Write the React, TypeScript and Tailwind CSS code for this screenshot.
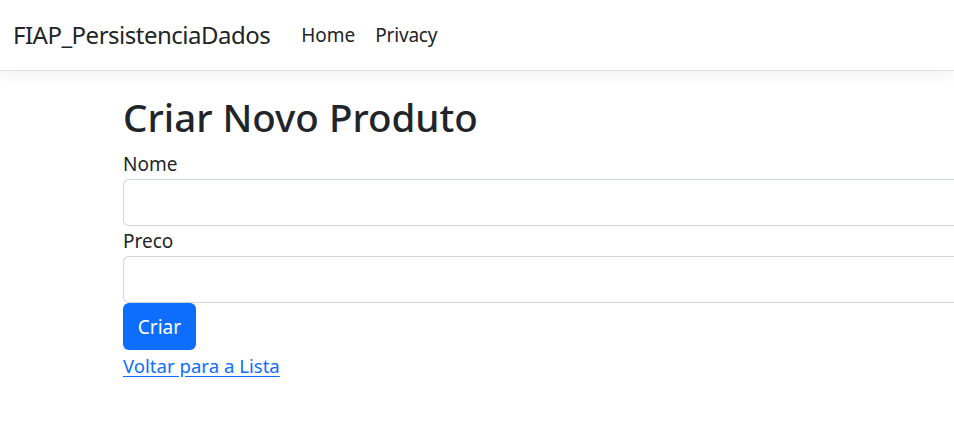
import React from "react";

export default function App() {
  const font = { fontFamily: '"Noto Sans", "Open Sans", sans-serif' };
  return (
    <div className="min-h-[446px] w-[954px] overflow-hidden bg-white text-[#212529]" style={font}>
      <nav className="h-[71px] flex items-center border-b border-[#dee2e6] bg-white shadow-[0_5px_15px_rgba(0,0,0,0.05)]">
        <span className="ml-[13px] text-[24px] leading-[36px] text-[#212529] tracking-[-0.5px]">FIAP_PersistenciaDados</span>
        <a className="ml-[31px] text-[19px] leading-[30px] text-[#212529]">Home</a>
        <a className="ml-[20px] text-[19px] leading-[30px] text-[#212529] tracking-[-0.2px]">Privacy</a>
      </nav>
      <main className="pl-[123px]">
        <h1 className="mt-[21px] mb-[7px] text-[38.5px] leading-[50px] font-medium text-[#212529]">Criar Novo Produto</h1>
        <form className="flex flex-col">
          <label className="text-[19px] leading-[30px]">Nome</label>
          <input className="h-[47px] w-full border border-r-0 border-[#ced4da] rounded-l-[6px] outline-none" />
          <label className="text-[19px] leading-[30px]">Preco</label>
          <input className="h-[47px] w-full border border-r-0 border-[#ced4da] rounded-l-[6px] outline-none" />
          <div>
            <button type="button" className="h-[47px] w-[73px] rounded-[6px] bg-[#0d6efd] text-white text-[19px] leading-[30px]">Criar</button>
          </div>
        </form>
        <div className="mt-[1px]">
          <a href="#" className="text-[18.6px] leading-[30px] text-[#0d6efd] underline underline-offset-[3px]">Voltar para a Lista</a>
        </div>
      </main>
    </div>
  );
}
